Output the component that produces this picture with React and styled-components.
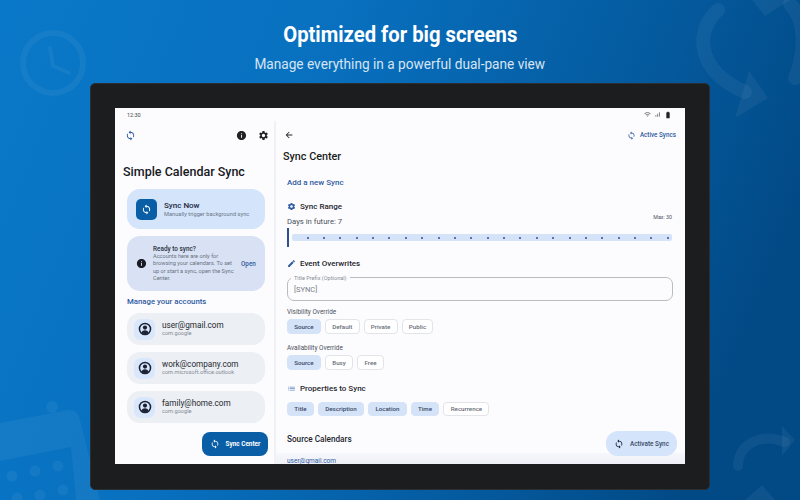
import styled, { createGlobalStyle } from 'styled-components';
import {
    MdSync, MdInfo, MdSettings, MdArrowBack, MdEdit, MdList,
    MdWifi, MdSignalCellularAlt, MdBatteryFull,
} from 'react-icons/md';

const GlobalStyle = createGlobalStyle`
    html, body {
        margin: 0;
        padding: 0;
        width: 800px;
        height: 500px;
        overflow: hidden;
        font-family: 'Roboto', 'Liberation Sans', sans-serif;
    }
    * { box-sizing: border-box; }
`;

const accounts = [
    { email: 'user@gmail.com', type: 'com.google' },
    { email: 'work@company.com', type: 'com.microsoft.office.outlook' },
    { email: 'family@home.com', type: 'com.google' },
];

const chipRows = {
    visibility: [['Source', true], ['Default'], ['Private'], ['Public']],
    availability: [['Source', true], ['Busy'], ['Free']],
    properties: [['Title', true], ['Description', true], ['Location', true], ['Time', true], ['Recurrence']],
};

const ticks = Array.from({ length: 23 });

function Chips({ items, tall }) {
    return <ChipRow $tall={tall}>
        {items.map(([label, active]) => (
            <Chip key={label} $active={active} $tall={tall}>{label}</Chip>
        ))}
    </ChipRow>
}

function AccountIcon() {
    return <svg width="14" height="14" viewBox="0 0 24 24" fill="#1a2233">
        <circle cx="12" cy="12" r="9.5" fill="none" stroke="#1a2233" strokeWidth="2.6" />
        <circle cx="12" cy="9.5" r="3.6" />
        <path d="M5.5 18.5c1.4-3 4-4.3 6.5-4.3s5.100 1.300 6.500 4.300c-1.700 1.500-4 2.300-6.500 2.300s-4.800-.8-6.500-2.300z" />
    </svg>
}

export default function App() {
    return <>
        <GlobalStyle />
        <Stage>
            <Decor viewBox="0 0 800 500">
                <g fill="none" stroke="#fff" strokeOpacity=".05" strokeLinecap="round" strokeLinejoin="round">
                    <circle cx="53" cy="63" r="30" strokeWidth="6" />
                    <path d="M50 48 L53 66 L69 73" strokeWidth="4" />
                    <path d="M718 10 C695 30 695 70 745 92" strokeWidth="14" />
                    <path d="M790 4 C806 20 806 50 795 78" strokeWidth="14" />
                    <path d="M738 466 C738 445 760 432 785 442" strokeWidth="10" />
                </g>
                <g fill="#fff" fillOpacity=".05">
                    <path d="M749 71 L768 98 L735 118 Z" />
                    <path d="M752 0 L790 0 L765 16 Z" />
                    <path d="M782 426 L795 440 L782 456 Z" />
                    <path d="M745 500 L762 485 L775 500 Z" />
                    <path d="M-5 424 L68 410 Q78 409 80 420 L100 500 L76 500 L71 447 L-5 462 Z" />
                    <circle cx="52" cy="407" r="6" />
                    <circle cx="12" cy="476" r="5.5" />
                    <circle cx="35" cy="471" r="5.5" />
                    <circle cx="58" cy="466" r="5.5" />
                    <circle cx="17" cy="498" r="5.5" />
                    <circle cx="40" cy="495" r="5.5" />
                    <circle cx="63" cy="490" r="5.5" />
                </g>
            </Decor>

            <Headline>Optimized for big screens</Headline>
            <Subline>Manage everything in a powerful dual-pane view</Subline>

            <Tablet>
                <Screen>
                    <StatusBar>
                        <span>12:30</span>
                        <StatusIcons>
                            <MdWifi size={7} />
                            <MdSignalCellularAlt size={7} />
                            <MdBatteryFull size={8} color="#222" />
                        </StatusIcons>
                    </StatusBar>

                    <Panes>
                        <LeftPane>
                            <LeftBar>
                                <MdSync size={11} color="#2f5aa0" />
                                <LeftActions>
                                    <MdInfo size={11} color="#222" />
                                    <MdSettings size={11} color="#222" />
                                </LeftActions>
                            </LeftBar>

                            <AppTitle>Simple Calendar Sync</AppTitle>

                            <SyncCard>
                                <SyncBadge><MdSync size={11} color="#fff" /></SyncBadge>
                                <div>
                                    <SyncTitle>Sync Now</SyncTitle>
                                    <SyncHint>Manually trigger background sync</SyncHint>
                                </div>
                            </SyncCard>

                            <InfoCard>
                                <MdInfo size={11} color="#1a1a22" />
                                <InfoText>
                                    <InfoTitle>Ready to sync?</InfoTitle>
                                    <InfoBody>Accounts here are only for browsing your calendars. To set up or start a sync, open the Sync Center.</InfoBody>
                                </InfoText>
                                <InfoLink>Open</InfoLink>
                            </InfoCard>

                            <ManageTitle>Manage your accounts</ManageTitle>

                            <AccountList>
                                {accounts.map(a => (
                                    <Account key={a.email}>
                                        <Avatar><AccountIcon /></Avatar>
                                        <div>
                                            <AccountMail>{a.email}</AccountMail>
                                            <AccountType>{a.type}</AccountType>
                                        </div>
                                    </Account>
                                ))}
                            </AccountList>

                            <CenterFab><MdSync size={10} /> Sync Center</CenterFab>
                        </LeftPane>

                        <RightPane>
                            <RightBar>
                                <MdArrowBack size={10} color="#222" />
                                <ActiveSyncs><MdSync size={9} /> Active Syncs</ActiveSyncs>
                            </RightBar>

                            <PaneTitle>Sync Center</PaneTitle>
                            <AddLink>Add a new Sync</AddLink>

                            <Section $top={13}>
                                <MdSettings size={9} color="#2f5aa0" /> Sync Range
                            </Section>
                            <RangeRow>
                                <span>Days in future: 7</span>
                                <Max>Max: 30</Max>
                            </RangeRow>
                            <Slider>
                                <Thumb />
                                <Track>
                                    {ticks.map((_, i) => <Tick key={i} />)}
                                </Track>
                            </Slider>

                            <Section $top={11}>
                                <MdEdit size={9} color="#2f5aa0" /> Event Overwrites
                            </Section>
                            <Field>
                                <FieldLabel>Title Prefix (Optional)</FieldLabel>
                                [SYNC]
                            </Field>

                            <GroupLabel $top={8}>Visibility Override</GroupLabel>
                            <Chips items={chipRows.visibility} tall />
                            <GroupLabel $top={11}>Availability Override</GroupLabel>
                            <Chips items={chipRows.availability} tall />

                            <Section $top={13}>
                                <MdList size={9} color="#6f8fc4" /> Properties to Sync
                            </Section>
                            <PropertyChips><Chips items={chipRows.properties} /></PropertyChips>

                            <SourceTitle>Source Calendars</SourceTitle>
                            <SourceBand>user@gmail.com</SourceBand>

                            <ActivateFab><MdSync size={10} color="#1a2233" /> Activate Sync</ActivateFab>
                        </RightPane>
                    </Panes>
                </Screen>
            </Tablet>
        </Stage>
    </>
}

const Stage = styled.div`
    position: relative;
    width: 800px;
    height: 500px;
    overflow: hidden;
    display: flex;
    flex-direction: column;
    align-items: center;
    padding-top: 22px;
    background: linear-gradient(112deg, #0a78c8 0%, #0870bf 35%, #04589b 70%, #024a86 88%, #024a86 100%);
`;

const Decor = styled.svg`
    position: absolute;
    inset: 0;
    width: 800px;
    height: 500px;
`;

const Headline = styled.h1`
    position: relative;
    margin: 0;
    font-size: 22px;
    line-height: 26px;
    font-weight: 700;
    color: #fff;
    white-space: nowrap;
    transform: scaleX(.92);
`;

const Subline = styled.p`
    position: relative;
    margin: 7px 0 0;
    font-size: 15px;
    line-height: 18px;
    color: #d6e4f2;
    white-space: nowrap;
    transform: scaleX(.91);
`;

const Tablet = styled.div`
    position: relative;
    margin-top: 10px;
    width: 620px;
    height: 407px;
    padding: 24px 24px 26px;
    background: #1c1d1f;
    border: 1px solid #2c2e32;
    border-radius: 5px;
`;

const Screen = styled.div`
    width: 570px;
    height: 356px;
    background: #fcfcff;
    display: flex;
    flex-direction: column;
    overflow: hidden;
`;

const StatusBar = styled.div`
    height: 13px;
    flex: none;
    padding: 0 13px 0 12px;
    display: flex;
    align-items: center;
    justify-content: space-between;
    font-size: 5.5px;
    color: #444;
`;

const StatusIcons = styled.div`
    display: flex;
    align-items: center;
    gap: 3px;
    color: #777;
`;

const Panes = styled.div`
    flex: 1;
    display: flex;
    min-height: 0;
`;

const LeftPane = styled.div`
    position: relative;
    width: 161px;
    flex: none;
    border-right: 2px solid #f0f1f5;
    padding: 0 0 0 12px;
`;

const LeftBar = styled.div`
    height: 11px;
    margin: 9px 0 0 -2px;
    display: flex;
    align-items: center;
    justify-content: space-between;
`;

const LeftActions = styled.div`
    display: flex;
    gap: 11px;
    margin-right: 5px;
`;

const AppTitle = styled.h2`
    margin: 23px 0 0 -4px;
    font-size: 12.5px;
    line-height: 16px;
    font-weight: 500;
    color: #17181c;
    white-space: nowrap;
`;

const SyncCard = styled.div`
    width: 138px;
    height: 40px;
    margin-top: 9px;
    padding: 0 9px;
    display: flex;
    align-items: center;
    gap: 7px;
    border-radius: 13px;
    background: #d3e4fb;
`;

const SyncBadge = styled.div`
    width: 21px;
    height: 21px;
    border-radius: 5px;
    background: #0a5ea6;
    display: flex;
    align-items: center;
    justify-content: center;
`;

const SyncTitle = styled.div`
    font-size: 8px;
    line-height: 10px;
    font-weight: 500;
    color: #1d2740;
`;

const SyncHint = styled.div`
    font-size: 5.7px;
    line-height: 7px;
    color: #6c7688;
    white-space: nowrap;
`;

const InfoCard = styled.div`
    width: 138px;
    height: 55px;
    margin-top: 7px;
    padding: 0 8px 0 9px;
    display: flex;
    align-items: center;
    border-radius: 13px;
    background: #d8e2f4;
`;

const InfoText = styled.div`
    width: 83px;
    margin-left: 6px;
    flex: none;
`;

const InfoTitle = styled.div`
    font-size: 6.4px;
    line-height: 8px;
    font-weight: 500;
    color: #2a3040;
`;

const InfoBody = styled.div`
    font-size: 5.6px;
    line-height: 7.3px;
    color: #6a7180;
`;

const InfoLink = styled.div`
    margin-left: 5px;
    font-size: 6.3px;
    font-weight: 500;
    color: #2f5aa0;
`;

const ManageTitle = styled.h3`
    margin: 6px 0 0;
    font-size: 7.8px;
    line-height: 10px;
    font-weight: 500;
    color: #2f5aa0;
`;

const AccountList = styled.div`
    margin-top: 6px;
    display: flex;
    flex-direction: column;
    gap: 7px;
`;

const Account = styled.div`
    width: 138px;
    height: 32px;
    padding: 0 5px 0 7px;
    display: flex;
    align-items: center;
    gap: 7px;
    border-radius: 13px;
    background: #eceff4;
`;

const Avatar = styled.div`
    width: 21px;
    height: 21px;
    flex: none;
    border-radius: 7px;
    background: #d8e7fc;
    display: flex;
    align-items: center;
    justify-content: center;
`;

const AccountMail = styled.div`
    font-size: 8.2px;
    line-height: 9px;
    color: #26292f;
    white-space: nowrap;
`;

const AccountType = styled.div`
    font-size: 5.6px;
    line-height: 7px;
    color: #858b95;
    white-space: nowrap;
`;

const CenterFab = styled.div`
    position: absolute;
    left: 87px;
    bottom: 8px;
    width: 66px;
    height: 24px;
    display: flex;
    align-items: center;
    justify-content: center;
    gap: 6px;
    border-radius: 8px;
    background: #0a5ea6;
    color: #fff;
    font-size: 6.4px;
    font-weight: 700;
    white-space: nowrap;
`;

const RightPane = styled.div`
    position: relative;
    flex: 1;
    min-width: 0;
    padding: 0 12px 0 11px;
    overflow: hidden;
`;

const RightBar = styled.div`
    height: 10px;
    margin: 9px -3px 0 -3px;
    display: flex;
    align-items: center;
    justify-content: space-between;
`;

const ActiveSyncs = styled.div`
    display: flex;
    align-items: center;
    gap: 4px;
    font-size: 6.3px;
    font-weight: 500;
    color: #2f5aa0;
`;

const PaneTitle = styled.h2`
    margin: 10px 0 0 -4px;
    font-size: 10.8px;
    line-height: 13px;
    font-weight: 500;
    color: #1a1c20;
`;

const AddLink = styled.div`
    margin-top: 15px;
    font-size: 8px;
    line-height: 10px;
    font-weight: 500;
    color: #2f5aa0;
`;

const Section = styled.div`
    margin-top: ${p => p.$top}px;
    height: 10px;
    display: flex;
    align-items: center;
    gap: 4px;
    font-size: 8px;
    font-weight: 500;
    color: #24262b;
`;

const RangeRow = styled.div`
    margin-top: 6px;
    height: 9px;
    display: flex;
    justify-content: space-between;
    font-size: 7.7px;
    line-height: 10px;
    color: #4c505a;
`;

const Max = styled.span`
    font-size: 5.3px;
    margin-top: -5px;
    margin-right: 1px;
`;

const Slider = styled.div`
    margin-top: 2px;
    height: 19px;
    display: flex;
    align-items: center;
    gap: 3px;
`;

const Thumb = styled.div`
    width: 1.5px;
    height: 19px;
    flex: none;
    background: #2f4f90;
`;

const Track = styled.div`
    flex: 1;
    height: 7px;
    padding: 0 3px 0 15px;
    margin-right: 1px;
    display: flex;
    align-items: center;
    justify-content: space-between;
    border-radius: 2px;
    background: #d5e3f8;
`;

const Tick = styled.span`
    width: 2px;
    height: 2px;
    border-radius: 50%;
    background: #2f4f90;
`;

const Field = styled.div`
    position: relative;
    margin-top: 9px;
    height: 24px;
    padding-left: 6px;
    display: flex;
    align-items: center;
    font-size: 7.5px;
    color: #7a7f89;
    border: 1px solid #b9bcc3;
    border-radius: 7px;
`;

const FieldLabel = styled.span`
    position: absolute;
    left: 3px;
    top: -3px;
    padding: 0 3px;
    font-size: 5.6px;
    line-height: 6px;
    color: #8a8e97;
    background: #fcfcff;
`;

const GroupLabel = styled.div`
    margin-top: ${p => p.$top}px;
    font-size: 6.4px;
    line-height: 7px;
    color: #4c505a;
`;

const ChipRow = styled.div`
    display: flex;
    gap: 4px;
    margin-top: ${p => (p.$tall ? 3 : 0)}px;
`;

const Chip = styled.div`
    height: ${p => (p.$tall ? 15 : 14)}px;
    padding: 0 6.3px;
    display: flex;
    align-items: center;
    font-size: 6.2px;
    font-weight: 500;
    color: ${p => (p.$active ? '#3a4a66' : '#686d78')};
    background: ${p => (p.$active ? '#d5e3f8' : '#fff')};
    border: 1px solid ${p => (p.$active ? '#d5e3f8' : '#e2e4ea')};
    border-radius: 4px;
`;

const PropertyChips = styled.div`
    margin-top: 9px;
`;

const SourceTitle = styled.div`
    margin-top: 18px;
    font-size: 8.2px;
    line-height: 10px;
    font-weight: 500;
    color: #24262b;
`;

const SourceBand = styled.div`
    margin: 9px -12px 0 -11px;
    padding: 4px 0 0 11px;
    height: 12px;
    font-size: 6.5px;
    line-height: 8px;
    color: #2f5aa0;
    background: linear-gradient(#f6f7fc, #edf0f6);
`;

const ActivateFab = styled.div`
    position: absolute;
    right: 8px;
    bottom: 8px;
    width: 71px;
    height: 25px;
    display: flex;
    align-items: center;
    justify-content: center;
    gap: 6px;
    border-radius: 12px;
    background: #d3e4fb;
    color: #3a4a66;
    font-size: 6.4px;
    font-weight: 500;
    white-space: nowrap;
`;
